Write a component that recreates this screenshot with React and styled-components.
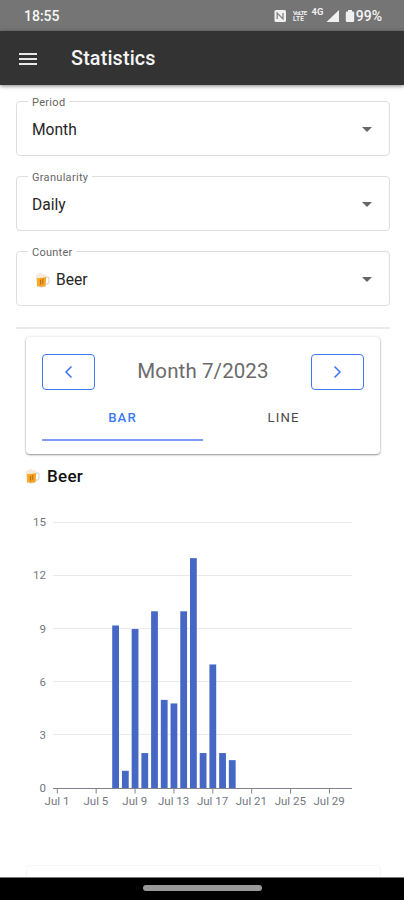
import React from "react";
import styled, { createGlobalStyle } from "styled-components";

const Global = createGlobalStyle`
  * { box-sizing: border-box; }
  body { margin: 0; background: #fff; font-family: Roboto, sans-serif; color: #262626; }
`;
const Screen = styled.div`
  width: 404px; height: 900px; display: flex; flex-direction: column; overflow: hidden; background: #fff;
`;
const StatusBar = styled.header`
  height: 31px; flex: none; background: #757575; color: #f5f5f5;
  display: flex; align-items: center; justify-content: space-between;
  padding: 1px 22px 0 24px; font-size: 14px; font-weight: 500; line-height: 18px;
`;
const StatusIcons = styled.div`display: flex; align-items: center;`;
const StatusSvg = styled.svg`display: block; width: 82px; height: 20px;`;
const Percent = styled.span`letter-spacing: 0;`;
const AppBar = styled.div`
  height: 54px; flex: none; background: #333; color: #f5f5f5; display: flex; align-items: center;
  gap: 34px; padding: 1px 19px 0; box-shadow: 0 1px 4px rgba(0,0,0,.5); z-index: 1;
`;
const MenuIcon = styled.svg`width: 18px; height: 14px; display: block;`;
const Title = styled.h1`margin: 0; font-size: 19.8px; font-weight: 500; letter-spacing: .15px;`;
const Content = styled.main`
  flex: 1; min-height: 0; display: flex; flex-direction: column; padding: 10px 14px 0 16px;
`;
const Fields = styled.div`display: flex; flex-direction: column; gap: 14px;`;
const Field = styled.fieldset`
  margin: 0; height: 61px; border: 1px solid #dedede; border-radius: 4px; padding: 0 17px 0 15px; min-width: 0;
`;
const Legend = styled.legend`
  margin-left: -4px; padding: 0 4px; height: 12px; font-size: 11px; line-height: 16px;
  color: #666; letter-spacing: ${(p) => p.$spacing || 0}px;
`;
const Value = styled.div`
  display: flex; align-items: center; justify-content: space-between; height: 46px; font-size: 15.6px;
`;
const WithMug = styled.span`display: flex; align-items: center; gap: ${(p) => p.$gap}px; padding-left: ${(p) => p.$inset || 0}px;`;
const MugSvg = styled.svg`display: block; width: 15px; height: 17px;`;
const Caret = styled.svg`width: 10px; height: 5px; display: block; margin-bottom: 2px;`;
const Divider = styled.hr`width: 100%; border: 0; height: 2px; margin: 21px 0 8px; background: #ebebeb; flex: none;`;
const Card = styled.section`
  height: 117px; flex: none; margin: 0 10px 0 10px; padding: 17px 16px 0; border-radius: 4px; background: #fff;
  box-shadow: 0 1px 2px rgba(0,0,0,.4), 0 0 3px rgba(0,0,0,.12);
`;
const Pager = styled.div`display: flex; align-items: center; justify-content: space-between;`;
const PageButton = styled.button`
  width: 53px; height: 36px; padding: 0; border: 1.5px solid #3f78f3; border-radius: 4px; background: #fff;
  display: flex; align-items: center; justify-content: center;
`;
const Arrow = styled.svg`width: 9px; height: 14px; fill: none; stroke: #3975f2; stroke-width: 1.5;`;
const Month = styled.h2`margin: -2px 0 0; font-size: 20.5px; font-weight: 400; color: #6b6b6b; letter-spacing: .1px;`;
const Tabs = styled.div`display: grid; grid-template-columns: 1fr 1fr; height: 51px;`;
const Tab = styled.div`
  display: flex; align-items: center; justify-content: center; padding-top: 6px;
  font-size: 13.2px; letter-spacing: 1.1px; font-weight: ${(p) => (p.$active ? 500 : 400)};
  color: ${(p) => (p.$active ? "#3c7af5" : "#4a4a4a")};
  border-bottom: 2px solid ${(p) => (p.$active ? "#7d9ff8" : "transparent")};
`;
const ChartTitle = styled.h3`
  margin: 11px 0 0 9px; height: 22px; flex: none; font-size: 17px; font-weight: 500; letter-spacing: .3px;
  color: #111; display: flex; align-items: center;
`;
const Chart = styled.svg`
  display: block; width: 374px; height: 320px; flex: none; margin-top: 10px;
  font-family: Roboto, sans-serif; font-size: 11.5px; fill: #737780;
`;
const NextCard = styled.div`
  height: 12px; flex: none; margin: 48px 9px 0 10px; border: 1px solid #f7f7f7; border-bottom: 0; border-radius: 4px 4px 0 0;
`;
const NavBar = styled.footer`
  height: 23px; flex: none; background: #000; border-top: 1px solid #777; display: flex; justify-content: center; padding-top: 7px;
`;
const Handle = styled.div`width: 119px; height: 6px; border-radius: 3px; background: #999;`;

function Mug() {
  return (
    <MugSvg viewBox="0 0 15 17">
      <path d="M10.5 5h1.8q1.7 0 1.7 2v2.7q0 2.2-3.5 2.8" fill="none" stroke="#dedbd6" strokeWidth="1.3" />
      <path d="M1.5 4.5h9.7l-.7 9.8q-4.3 1.6-8.3 0z" fill="#f5a01c" />
      <path d="M2.2 6h2.2v8l-2-.5zM8.7 7h1.8l-.3 6-1.6.7z" fill="#f8ac2b" />
      <path d="M5 8h1v4.5H5zM7.3 7h1v5h-1z" fill="#b86d1d" />
      <path d="M1 5.8Q0 3 2.5 2.6 5-.1 7.4 2q3.7-.5 4.1 2.2-.5 1.8-2.8 1.1-1.7 1.2-3.5.4Q3.8 6.8 1 5.8z" fill="#f5eadc" />
      <path d="M2 14.3q4.2 1.5 8.6 0" fill="none" stroke="#e6ccaa" />
    </MugSvg>
  );
}

function SelectField({ label, spacing, children }) {
  return (
    <Field>
      <Legend $spacing={spacing}>{label}</Legend>
      <Value>
        {children}
        <Caret viewBox="0 0 10 5"><path d="M0 0h10L5 5z" fill="#666" /></Caret>
      </Value>
    </Field>
  );
}

const DATA = { 7: 9.2, 8: 1, 9: 9, 10: 2, 11: 10, 12: 5, 13: 4.8, 14: 10, 15: 13, 16: 2, 17: 7, 18: 2, 19: 1.6 };
const BASE = 291.5;
const UNIT = 17.72;
const dayX = (d) => 41.3 + (d - 1) * 9.72;

function BarChart() {
  return (
    <Chart viewBox="0 0 374 320">
      {[15, 12, 9, 6, 3, 0].map((n) => (
        <g key={n}>
          {n > 0 && <path d={`M37 ${Math.round(BASE - n * UNIT) - 0.5}H336`} stroke="#e8eaee" />}
          <text x="30" y={BASE - n * UNIT + 3.5} textAnchor="end">{n}</text>
        </g>
      ))}
      {Object.entries(DATA).map(([d, v]) => (
        <rect key={d} x={dayX(d) - 3.4} y={BASE - v * UNIT} width="6.8" height={v * UNIT} fill="#4668c5" />
      ))}
      <path d={`M37 ${BASE}H336`} stroke="#80838a" />
      {[1, 5, 9, 13, 17, 21, 25, 29].map((d) => (
        <g key={d}>
          <path d={`M${dayX(d)} ${BASE}v5`} stroke="#80838a" />
          <text x={dayX(d) - 0.3} y="308" textAnchor="middle">{`Jul ${d}`}</text>
        </g>
      ))}
    </Chart>
  );
}

export default function App() {
  return (
    <Screen>
      <Global />
      <StatusBar>
        <span>18:55</span>
        <StatusIcons>
          <StatusSvg viewBox="0 0 82 20" fill="#f0f0f0" fontFamily="Roboto, sans-serif" fontWeight="700">
            <rect x="0.5" y="4" width="11.5" height="12" rx="1.5" />
            <path d="M3.2 13V7l5.8 6V7" fill="none" stroke="#858585" strokeWidth="1.3" />
            <text x="19" y="9" fontSize="6" textLength="14">VoLTE</text>
            <text x="19" y="15.3" fontSize="6.5" textLength="11">LTE</text>
            <text x="37.5" y="9" fontSize="9.4" textLength="12">4G</text>
            <path d="M65 4v12H52.5z" />
            <path d="M74 4h4v1.5h1q1.2 0 1.2 1.2v8.1q0 1.2-1.2 1.2h-6q-1.2 0-1.2-1.2V6.7q0-1.2 1.2-1.2h1z" />
          </StatusSvg>
          <Percent>99%</Percent>
        </StatusIcons>
      </StatusBar>
      <AppBar>
        <MenuIcon viewBox="0 0 18 14"><path d="M0 2h18M0 7h18M0 12h18" stroke="#e8e8e8" strokeWidth="2" /></MenuIcon>
        <Title>Statistics</Title>
      </AppBar>
      <Content>
        <Fields>
          <SelectField label="Period" spacing={0.3}><span>Month</span></SelectField>
          <SelectField label="Granularity" spacing={0.3}><span>Daily</span></SelectField>
          <SelectField label="Counter" spacing={0.25}><WithMug $gap={6} $inset={3}><Mug />Beer</WithMug></SelectField>
        </Fields>
        <Divider />
        <Card>
          <Pager>
            <PageButton aria-label="Previous month"><Arrow viewBox="0 0 9 14"><path d="M7.5 1.5 2 7l5.5 5.5" /></Arrow></PageButton>
            <Month>Month 7/2023</Month>
            <PageButton aria-label="Next month"><Arrow viewBox="0 0 9 14"><path d="M1.5 1.5 7 7l-5.5 5.5" /></Arrow></PageButton>
          </Pager>
          <Tabs><Tab $active>BAR</Tab><Tab>LINE</Tab></Tabs>
        </Card>
        <ChartTitle><WithMug $gap={7}><Mug />Beer</WithMug></ChartTitle>
        <BarChart />
        <NextCard />
      </Content>
      <NavBar><Handle /></NavBar>
    </Screen>
  );
}
